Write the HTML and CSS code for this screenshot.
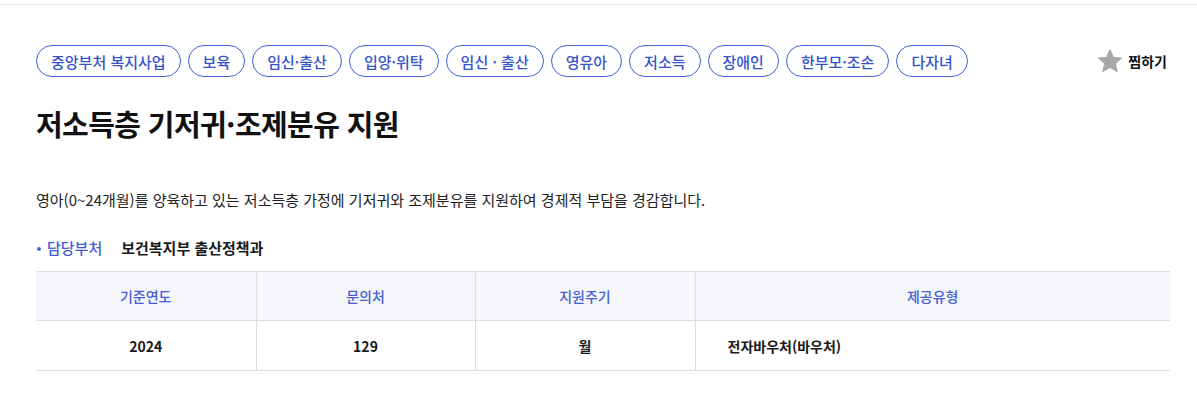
FILE: index.html
```html
<!DOCTYPE html>
<html lang="ko">
<head>
<meta charset="utf-8">
<title>저소득층 기저귀·조제분유 지원</title>
<link rel="stylesheet" href="styles.css">
</head>
<body>
<div class="topline"></div>
<main class="wrap">
  <div class="tagrow">
    <ul class="tags">
      <li class="tag">중앙부처 복지사업</li>
      <li class="tag">보육</li>
      <li class="tag">임신·출산</li>
      <li class="tag">입양·위탁</li>
      <li class="tag">임신 · 출산</li>
      <li class="tag">영유아</li>
      <li class="tag">저소득</li>
      <li class="tag">장애인</li>
      <li class="tag">한부모·조손</li>
      <li class="tag">다자녀</li>
    </ul>
    <button class="fav" type="button">
      <svg class="star" viewBox="0 0 24 24" width="26" height="26" aria-hidden="true">
        <path d="M12 1.6l3.1 7 7.4.7-5.6 5 1.7 7.4L12 17.8l-6.6 3.9 1.7-7.4-5.6-5 7.4-.7z" fill="#a8a8a8" stroke="#a8a8a8" stroke-width="1" stroke-linejoin="round"/>
      </svg>
      <span>찜하기</span>
    </button>
  </div>
  <h1 class="title">저소득층 기저귀·조제분유 지원</h1>
  <p class="desc">영아(0~24개월)를 양육하고 있는 저소득층 가정에 기저귀와 조제분유를 지원하여 경제적 부담을 경감합니다.</p>
  <div class="dept">
    <span class="dept-label">담당부처</span>
    <span class="dept-name">보건복지부 출산정책과</span>
  </div>
  <table class="info">
    <colgroup>
      <col class="c1"><col class="c2"><col class="c3"><col class="c4">
    </colgroup>
    <thead>
      <tr><th>기준연도</th><th>문의처</th><th>지원주기</th><th>제공유형</th></tr>
    </thead>
    <tbody>
      <tr><td>2024</td><td>129</td><td>월</td><td class="left">전자바우처(바우처)</td></tr>
    </tbody>
  </table>
</main>
</body>
</html>
```

FILE: styles.css
```css
* { box-sizing: border-box; }
html, body { margin: 0; padding: 0; background: #fff; }
body {
  font-family: "Noto Sans CJK KR", "Noto Sans", sans-serif;
  color: #1a1a1a;
}
.topline {
  margin-top: 4px;
  height: 1px;
  background: #e2e2e2;
}
.wrap {
  padding: 40px 27px 0 36px;
}
.tagrow {
  display: flex;
  justify-content: space-between;
  align-items: center;
}
.tags {
  list-style: none;
  margin: 0;
  padding: 0;
  display: flex;
  gap: 7px;
}
.tag {
  height: 32px;
  padding: 0 14px;
  border: 1px solid #4262dc;
  border-radius: 16px;
  color: #3553cc;
  font-size: 15px;
  font-weight: 500;
  display: flex;
  align-items: center;
  line-height: 1;
}
.fav {
  display: flex;
  align-items: center;
  gap: 5px;
  border: 0;
  background: none;
  padding: 0;
  margin-right: 3px;
  font-family: inherit;
  font-size: 14px;
  font-weight: 700;
  color: #111;
  cursor: pointer;
}
.title {
  margin: 26px 0 0;
  font-size: 29px;
  line-height: 40px;
  font-weight: 700;
  letter-spacing: -0.6px;
  color: #111;
}
.desc {
  margin: 46px 0 0;
  font-size: 15px;
  line-height: 22px;
  color: #222;
}
.dept {
  margin-top: 26px;
  display: flex;
  align-items: center;
  font-size: 15px;
  line-height: 22px;
}
.dept-label {
  position: relative;
  padding-left: 11px;
  color: #3f5bd6;
  font-weight: 500;
}
.dept-label::before {
  content: "";
  position: absolute;
  left: 1px;
  top: 10px;
  width: 4px;
  height: 4px;
  border-radius: 50%;
  background: #4a66dc;
}
.dept-name {
  margin-left: 19px;
  font-weight: 700;
  color: #1a1a1a;
}
.info {
  margin-top: 12px;
  width: 100%;
  border-collapse: collapse;
  table-layout: fixed;
  font-size: 14px;
}
.c1 { width: 220px; }
.c2 { width: 219px; }
.c3 { width: 220px; }
.info th, .info td {
  border: 1px solid #dedede;
  text-align: center;
}
.info tr > :first-child { border-left: 0; }
.info tr > :last-child { border-right: 0; }
.info th {
  height: 49px;
  background: #f5f6fa;
  color: #4560d6;
  font-weight: 500;
}
.info td {
  height: 50px;
  font-weight: 700;
  color: #1a1a1a;
}
.info td.left {
  text-align: left;
  padding-left: 32px;
}
```
